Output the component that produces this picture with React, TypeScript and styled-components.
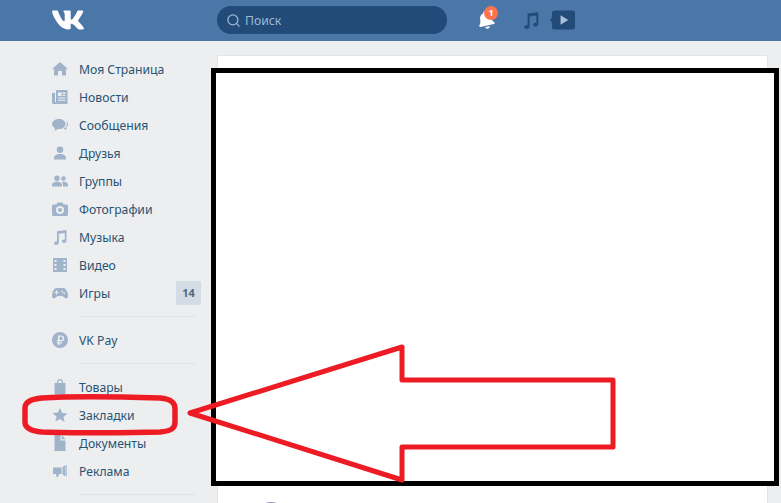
import React from "react";
import styled, { createGlobalStyle } from "styled-components";
import { FaVk, FaBell } from "react-icons/fa";
import { Search } from "lucide-react";

const GlobalStyle = createGlobalStyle`
  html, body {
    margin: 0;
    height: 503px;
    overflow: hidden;
    background: #edeef0;
    font-family: "Noto Sans", "Liberation Sans", sans-serif;
  }
`;

const Page = styled.div`
  position: relative;
  width: 781px;
  height: 503px;
  overflow: hidden;
`;

const Header = styled.header`
  display: flex;
  align-items: center;
  height: 41px;
  padding-left: 51px;
  background: #4a76a8;
  box-sizing: border-box;
`;

const Logo = styled.div`
  display: flex;
  width: 166px;
  color: #fff;
  margin-top: -2px;
`;

const SearchBox = styled.div`
  display: flex;
  align-items: center;
  gap: 4px;
  width: 230px;
  height: 28px;
  margin-top: -1px;
  padding-left: 9px;
  box-sizing: border-box;
  border-radius: 14px;
  background: #224b7a;
  color: #9fb8d2;
  font-size: 12.2px;
`;

const HeaderIcons = styled.div`
  display: flex;
  align-items: center;
  margin-left: 30px;
  margin-top: -1px;
`;

const BellWrap = styled.div`
  position: relative;
  display: flex;
  width: 46px;
  color: #fff;

  svg {
    transform: rotate(-12deg);
  }
`;

const Badge = styled.span`
  position: absolute;
  left: 7px;
  top: -5px;
  width: 14px;
  height: 14px;
  border-radius: 50%;
  background: #ff734c;
  color: #fff;
  font-size: 9px;
  font-weight: 700;
  line-height: 14px;
  text-align: center;
`;

const MusicIcon = styled.svg`
  width: 18px;
  height: 18px;
  margin-left: -1px;
  fill: #224b7a;
`;

const VideoIcon = styled.svg`
  width: 25px;
  height: 20px;
  margin-left: 10px;
`;

const Body = styled.div`
  display: flex;
  padding-top: 14px;
`;

const Sidebar = styled.nav`
  width: 149px;
  margin-left: 52px;
  margin-right: 16px;
  flex: none;
`;

const Row = styled.div`
  display: flex;
  align-items: center;
  height: 28px;
  color: #285473;
  font-size: 12.2px;
`;

const IconSlot = styled.svg`
  width: 16px;
  height: 16px;
  margin-right: 11px;
  flex: none;
  fill: #9fb4cb;
`;

const Label = styled.span`
  flex: 1;
`;

const Count = styled.span`
  width: 25px;
  height: 24px;
  border-radius: 2px;
  background: #d3dbe4;
  color: #55677d;
  font-size: 11px;
  font-weight: 700;
  line-height: 24px;
  text-align: center;
`;

const Divider = styled.hr`
  height: 1px;
  margin: 9px 6px 9px 27px;
  border: 0;
  background: #dfe2e8;
`;

const Card = styled.main`
  width: 551px;
  height: 460px;
  padding: 446px 0 0 36px;
  box-sizing: border-box;
  flex: none;
  background: #fff;
  border: 1px solid #e3e4e8;
  border-radius: 2px 2px 0 0;
`;

const Avatar = styled.div`
  width: 34px;
  height: 34px;
  border-radius: 50%;
  background: #8d9bb0;
`;

const CensorBox = styled.div`
  position: absolute;
  left: 211px;
  top: 68px;
  width: 568px;
  height: 418px;
  box-sizing: border-box;
  border: 5px solid #000;
  background: #fff;
`;

const Markup = styled.svg`
  position: absolute;
  left: 0;
  top: 0;
  fill: none;
  stroke: #ed1c24;
  stroke-width: 5;
`;

type NavItem = { label: string; icon: React.ReactNode; count?: string };

const icons: Record<string, React.ReactNode> = {
  home: <path d="M8 1 16 8h-2v6.500h-4V10H6v4.500H2V8H0z" />,
  news: <path d="M4 1h11.500v14H1.500A1.500 1.500 0 0 1 0 13.500V4h3v9h1zM6 3.500V7h3.500V3.500zM10.500 3.500V5h3V3.500zM10.500 6v1h3V6zM6 8.500v1h7.500v-1zM6 10.800v1h7.500v-1z" />,
  chat: <path d="M7 2c3.600 0 6.500 2.100 6.500 5S10.600 12 7 12l-1.200-.1C4.800 12.800 3.400 13.300 2 13.300c.6-.6 1-1.300 1.100-2.200C1.200 10.200 0 8.700 0 7c0-2.900 3.100-5 7-5zM14.500 4.200C15.500 5 16 6 16 7.200c0 1.500-.8 2.700-2 3.400 0 .9.400 1.600 1 2.200-1.300 0-2.500-.4-3.400-1.200 2-1 3.300-2.800 3.300-4.700 0-1-.2-1.900-.4-2.700z" />,
  friend: <path d="M8 1.500a3.300 3.300 0 1 1 0 6.600 3.300 3.300 0 0 1 0-6.600zM2 13c0-2.800 3-4 6-4s6 1.200 6 4v1.500H2z" />,
  group: <path d="M5 2.500a2.700 2.700 0 1 1 0 5.400 2.700 2.700 0 0 1 0-5.400zM11.500 3.200a2.300 2.300 0 1 1 0 4.600 2.300 2.300 0 0 1 0-4.600zM0 12c0-2.300 2.400-3.200 5-3.200s5 .9 5 3.200v1.500H0zM11 13.500V12c0-1.200-.5-2.200-1.300-3 .6-.2 1.200-.2 1.800-.2 2.300 0 4.500.8 4.500 3v1.700z" />,
  camera: <path d="M5.500 1.500h5l1 2h3A1.500 1.500 0 0 1 16 5v8.500a1.500 1.500 0 0 1-1.500 1.500h-13A1.500 1.500 0 0 1 0 13.500V5a1.500 1.500 0 0 1 1.500-1.500h3zM8 5a4 4 0 1 0 0 8 4 4 0 0 0 0-8zM8 7a2 2 0 1 1 0 4 2 2 0 0 1 0-4z" />,
  music: <path d="M5 2.200 14.500 1v10.800c0 1.300-1.200 2.100-2.500 2.100-1.200 0-2.100-.6-2.100-1.600s1.100-1.800 2.400-1.800l.5.100V4L6.800 4.800V14c0 1.100-1.200 1.900-2.500 1.900S2 15.200 2 14.200s1.100-1.700 2.500-1.700l.5.100z" />,
  video: <path d="M1 1h14v14H1zM2.500 3v2h2V3zM11.500 3v2h2V3zM2.500 7v2h2V7zM11.500 7v2h2V7zM2.500 11v2h2v-2zM11.500 11v2h2v-2z" />,
  game: <path d="M4.500 3h7C14 3 16 7 16 11c0 1.500-.8 2.500-2 2.500-1.500 0-2.500-2.500-4-2.500H6c-1.500 0-2.500 2.500-4 2.500-1.200 0-2-1-2-2.500C0 7 2 3 4.500 3zM4 5.500V7H2.500v1H4v1.500h1V8h1.500V7H5V5.500zM11 6.500a.8.800 0 1 0 0 .1zM13 8a.8.800 0 1 0 0 .1z" />,
  pay: <path d="M8 0a8 8 0 1 1 0 16A8 8 0 0 1 8 0zM6 3.500V8H4.800v1.300H6v1H4.800v1.200H6V13h1.500v-1.500h2.500v-1.200H7.500v-1H9.500c1.700 0 2.700-1.200 2.700-2.900s-1-2.900-2.700-2.900zM7.500 4.800h2c.8 0 1.200.7 1.200 1.600S10.300 8 9.500 8h-2z" />,
  bag: <path d="M5 4V3a3 3 0 0 1 6 0v1h2.500v10a1.500 1.500 0 0 1-1.500 1.500H4A1.500 1.500 0 0 1 2.500 14V4zM6.300 4h3.400V3a1.700 1.700 0 0 0-3.400 0z" />,
  star: <path d="m8 1 2.200 4.900 5.300.5-4 3.500 1.200 5.200L8 12l-4.700 2.600 1.200-5.200-4-3.500 5.300-.5z" />,
  doc: <path d="M2.500 0H8.500v5.500h5V16h-11zM9.800 0l3.700 4.200H9.800z" />,
  ad: <path d="M1 4.500h8.500v6.500H7l-.8 3H4.500l-.5-3H1zM10.500 4.200 13.500 2v11.500l-3-2.200zM14.300 2H15v11.500h-.7z" />,
};

const Icon = ({ name }: { name: string }) => <IconSlot viewBox="0 0 16 16">{icons[name]}</IconSlot>;

const mainItems: NavItem[] = [
  { label: "Моя Страница", icon: <Icon name="home" /> },
  { label: "Новости", icon: <Icon name="news" /> },
  { label: "Сообщения", icon: <Icon name="chat" /> },
  { label: "Друзья", icon: <Icon name="friend" /> },
  { label: "Группы", icon: <Icon name="group" /> },
  { label: "Фотографии", icon: <Icon name="camera" /> },
  { label: "Музыка", icon: <Icon name="music" /> },
  { label: "Видео", icon: <Icon name="video" /> },
  { label: "Игры", icon: <Icon name="game" />, count: "14" },
];

const extraItems: NavItem[] = [
  { label: "Товары", icon: <Icon name="bag" /> },
  { label: "Закладки", icon: <Icon name="star" /> },
  { label: "Документы", icon: <Icon name="doc" /> },
  { label: "Реклама", icon: <Icon name="ad" /> },
];

const NavRow = ({ item }: { item: NavItem }) => (
  <Row>
    {item.icon}
    <Label>{item.label}</Label>
    {item.count && <Count>{item.count}</Count>}
  </Row>
);

const App = () => {
  return (
    <Page>
      <GlobalStyle />
      <Header>
        <Logo>
          <FaVk size={34} />
        </Logo>
        <SearchBox>
          <Search size={15} strokeWidth={2} />
          Поиск
        </SearchBox>
        <HeaderIcons>
          <BellWrap>
            <FaBell size={18} />
            <Badge>1</Badge>
          </BellWrap>
          <MusicIcon viewBox="0 0 16 16">{icons.music}</MusicIcon>
          <VideoIcon viewBox="0 0 26 20">
            <path d="M5 0h18a3 3 0 0 1 3 3v14a3 3 0 0 1-3 3H5a3 3 0 0 1-3-3v-4.500L0 10l2-2.500V3a3 3 0 0 1 3-3z" fill="#224b7a" />
            <path d="M11 5v10l8-5z" fill="#a9c0da" />
          </VideoIcon>
        </HeaderIcons>
      </Header>
      <Body>
        <Sidebar>
          {mainItems.map((item) => (
            <NavRow key={item.label} item={item} />
          ))}
          <Divider />
          <NavRow item={{ label: "VK Pay", icon: <Icon name="pay" /> }} />
          <Divider />
          {extraItems.map((item) => (
            <NavRow key={item.label} item={item} />
          ))}
          <Divider />
        </Sidebar>
        <Card>
          <Avatar />
        </Card>
      </Body>
      <CensorBox />
      <Markup width="781" height="503" viewBox="0 0 781 503">
        <path d="M190 413 402 347V380H613V447H402V480Z" strokeLinejoin="round" />
        <path
          d="M42 398C70 396 130 397 160 398 172 399 175 403 175 409V422C175 428 172 431 160 432 130 433 70 433 42 432 30 431 25 428 25 422V408C25 402 30 399 42 398Z"
          strokeWidth="5.500"
        />
      </Markup>
    </Page>
  );
};

export default App;
